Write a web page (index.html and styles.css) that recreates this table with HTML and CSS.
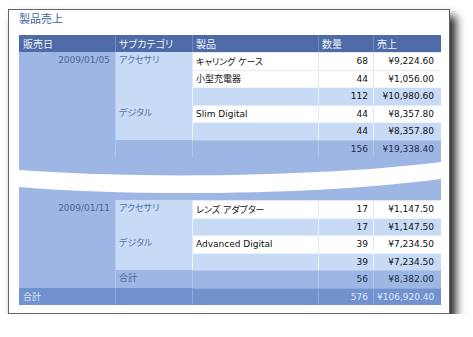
FILE: index.html
```html
<!DOCTYPE html>
<html lang="ja">
<head>
    <meta charset="UTF-8">
    <title>製品売上</title>
    <link rel="stylesheet" href="styles.css">
</head>
<body>

    <div class="sheet">
        <h1 class="title">製品売上</h1>

        <table class="report">
            <colgroup>
                <col class="col-date">
                <col class="col-sub">
                <col class="col-prod">
                <col class="col-qty">
                <col class="col-amt">
            </colgroup>
            <thead>
                <tr>
                    <th>販売日</th>
                    <th>サブカテゴリ</th>
                    <th>製品</th>
                    <th>数量</th>
                    <th>売上</th>
                </tr>
            </thead>
            <tbody>
                <!-- 2009/01/05 -->
                <tr>
                    <td class="date" rowspan="6">2009/01/05</td>
                    <td class="sub" rowspan="3">アクセサリ</td>
                    <td class="prod">キャリング ケース</td>
                    <td class="num">68</td>
                    <td class="num">¥9,224.60</td>
                </tr>
                <tr>
                    <td class="prod">小型充電器</td>
                    <td class="num">44</td>
                    <td class="num">¥1,056.00</td>
                </tr>
                <tr class="subtotal">
                    <td class="prod"></td>
                    <td class="num">112</td>
                    <td class="num">¥10,980.60</td>
                </tr>
                <tr>
                    <td class="sub" rowspan="2">デジタル</td>
                    <td class="prod">Slim Digital</td>
                    <td class="num">44</td>
                    <td class="num">¥8,357.80</td>
                </tr>
                <tr class="subtotal">
                    <td class="prod"></td>
                    <td class="num">44</td>
                    <td class="num">¥8,357.80</td>
                </tr>
                <tr class="total">
                    <td class="sub"></td>
                    <td class="prod"></td>
                    <td class="num">156</td>
                    <td class="num">¥19,338.40</td>
                </tr>

                <!-- page break -->
                <tr class="break">
                    <td colspan="5">
                        <svg class="tear" viewBox="0 0 422 43" preserveAspectRatio="none">
                            <path d="M0,13 C120,22 300,20 422,5 L422,22 C300,38 120,40 0,30 Z" fill="#fff"/>
                        </svg>
                    </td>
                </tr>

                <!-- 2009/01/11 -->
                <tr>
                    <td class="date" rowspan="5">2009/01/11</td>
                    <td class="sub" rowspan="2">アクセサリ</td>
                    <td class="prod">レンズ アダプター</td>
                    <td class="num">17</td>
                    <td class="num">¥1,147.50</td>
                </tr>
                <tr class="subtotal">
                    <td class="prod"></td>
                    <td class="num">17</td>
                    <td class="num">¥1,147.50</td>
                </tr>
                <tr>
                    <td class="sub" rowspan="2">デジタル</td>
                    <td class="prod">Advanced Digital</td>
                    <td class="num">39</td>
                    <td class="num">¥7,234.50</td>
                </tr>
                <tr class="subtotal">
                    <td class="prod"></td>
                    <td class="num">39</td>
                    <td class="num">¥7,234.50</td>
                </tr>
                <tr class="total">
                    <td class="sub">合計</td>
                    <td class="prod"></td>
                    <td class="num">56</td>
                    <td class="num">¥8,382.00</td>
                </tr>
                <tr class="grand">
                    <td class="date-label">合計</td>
                    <td class="sub"></td>
                    <td class="prod"></td>
                    <td class="num">576</td>
                    <td class="num">¥106,920.40</td>
                </tr>
            </tbody>
        </table>
    </div>

</body>
</html>
```

FILE: styles.css
```css
/* Page */
body {
    margin: 0;
    background: #fff;
    font-family: "DejaVu Sans", "Noto Sans CJK JP", sans-serif;
}

/* Report sheet with drop shadow */
.sheet {
    width: 430px;
    height: 295px;
    margin: 9px 0 0 8px;
    padding: 0 0 8px 10px;
    border: 1px solid #666;
    background: #fff;
    box-shadow: 6px 7px 9px rgba(0, 0, 0, 0.85);
}

.title {
    margin: 0 0 8px;
    height: 17px;
    line-height: 17px;
    font-size: 11px;
    font-weight: normal;
    color: #3b5fa3;
    font-family: "Noto Sans CJK JP", sans-serif;
    font-feature-settings: "palt";
}

/* Table */
.report {
    width: 422px;
    table-layout: fixed;
    border-collapse: separate;
    border-spacing: 0;
    font-size: 9px;
}

.col-date { width: 96px; }
.col-sub { width: 77px; }
.col-prod { width: 126px; }
.col-qty { width: 55px; }
.col-amt { width: 68px; }

.report th {
    height: 17px;
    padding: 0 3px;
    background: #4e6ba8;
    color: #eef2fa;
    font-size: 10px;
    font-weight: normal;
    text-align: left;
    border-left: 1px solid #7089bd;
    font-family: "Noto Sans CJK JP", sans-serif;
    font-feature-settings: "palt";
}

.report th:first-child {
    border-left: none;
    padding-left: 4px;
}

.report tbody tr {
    height: 17.5px;
}

.report td {
    padding: 0 5px 0 3px;
    white-space: nowrap;
    overflow: hidden;
    font-feature-settings: "palt";
}

.report td.prod,
.report td.num {
    background: #fff;
    color: #111;
    border-left: 1px solid #e3e9f4;
    border-top: 1px solid #e3e9f4;
}

.num {
    text-align: right;
}

.report td.num:last-child {
    padding-right: 7px;
}

/* Grouping columns */
.date {
    vertical-align: top;
    text-align: right;
    line-height: 17.5px;
    background: #9db6e3;
    color: #4d6699;
}

.report td.date {
    padding-right: 5px;
}

.sub {
    vertical-align: top;
    line-height: 17.5px;
    background: #c7daf6;
    color: #5572a8;
    border-left: 1px solid #b6cbee;
}

/* Subtotal, total and grand total rows */
.report .subtotal td.prod,
.report .subtotal td.num {
    background: #c7daf6;
    border-color: rgba(255, 255, 255, 0.7);
}

.report .total td,
.report .total td.prod,
.report .total td.num {
    background: #9db6e3;
    color: #1e2d4a;
    border-color: #b3c7ec;
}

.report .total td.sub {
    color: #4d6699;
    vertical-align: middle;
}

.report .grand td,
.report .grand td.prod,
.report .grand td.num {
    background: #7192ce;
    color: #dfe8f7;
    border-color: #8ea9da;
}

.report .grand td.date-label {
    padding-left: 4px;
    border-left: none;
}

.report .grand td.sub {
    vertical-align: middle;
}

/* Torn page break */
.report .break td {
    height: 43px;
    padding: 0;
    background: #9db6e3;
}

.tear {
    display: block;
    width: 422px;
    height: 43px;
}
```
